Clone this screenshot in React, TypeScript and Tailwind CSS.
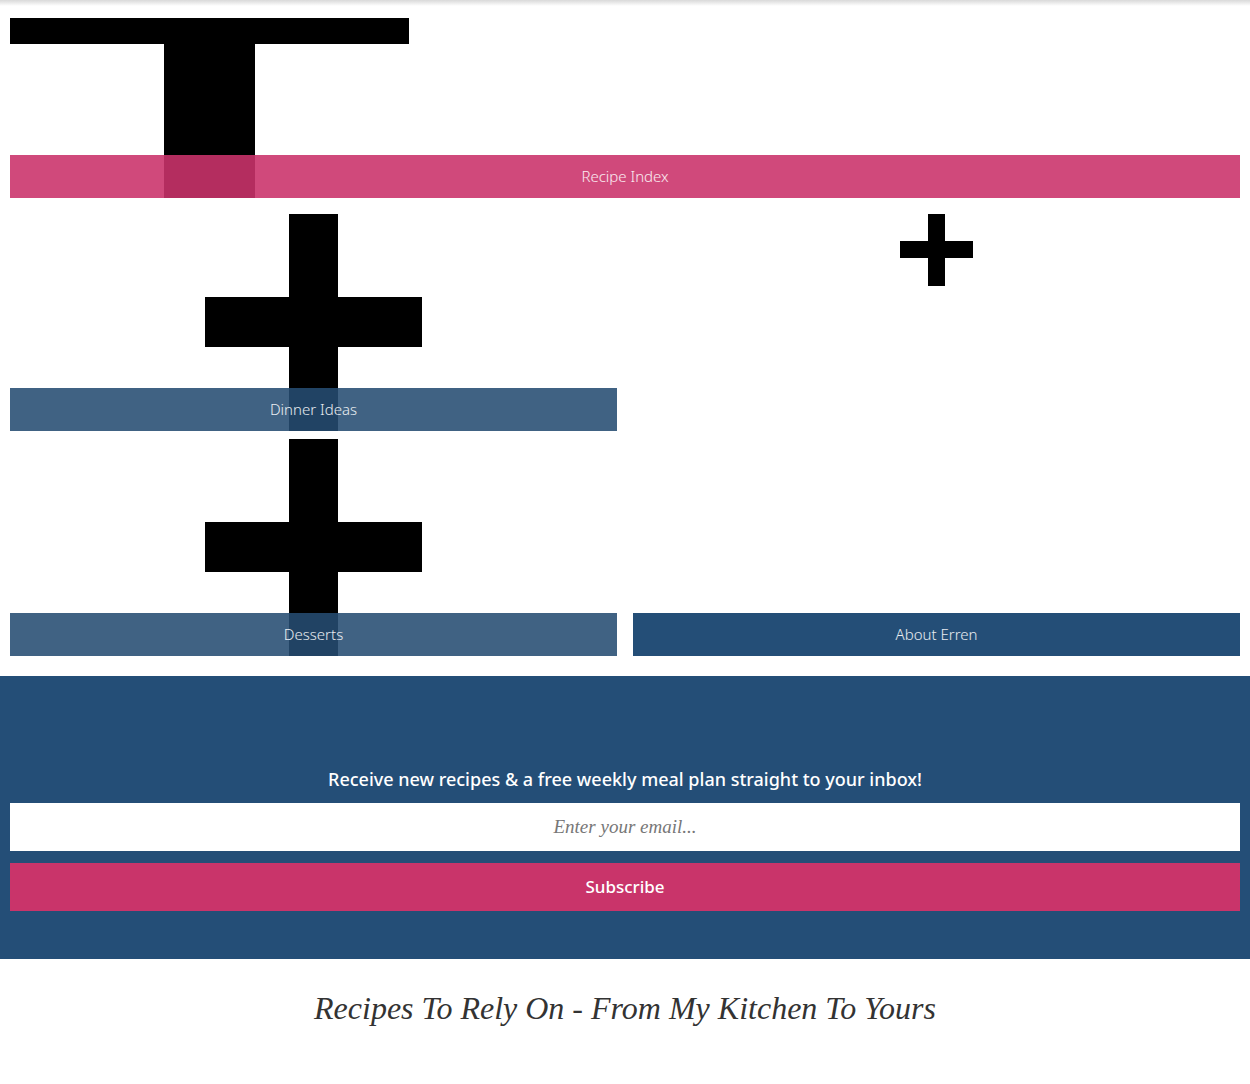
import React from "react";

const sans = { fontFamily: "'Noto Sans', Lato, sans-serif" };
const serif = { fontFamily: "'Liberation Serif', 'DejaVu Serif', serif" };

function Caption({ label, tone }: { label: string; tone: "pink" | "blue" | "solid" }) {
  const bg =
    tone === "pink"
      ? "bg-[rgba(202,51,107,0.89)]"
      : tone === "blue"
      ? "bg-[rgba(38,76,114,0.88)]"
      : "bg-[#244e77]";
  return (
    <div
      className={`absolute bottom-0 left-0 right-0 h-[43px] flex items-center justify-center text-[15px] font-light text-white/90 ${bg}`}
      style={sans}
    >
      {label}
    </div>
  );
}

function BigPlus() {
  return (
    <svg width="217" height="217" viewBox="0 0 217 217" className="block mx-auto">
      <rect x="84" y="0" width="49" height="217" fill="#000" />
      <rect x="0" y="83" width="217" height="50" fill="#000" />
    </svg>
  );
}

export default function App() {
  return (
    <div className="bg-white min-h-[1084px] w-full">
      <div className="h-[6px] bg-gradient-to-b from-[#d9d9d9] to-white" />
      <div className="px-[10px] pt-[12px]">
        <div className="relative h-[180px]">
          <svg width="399" height="180" viewBox="0 0 399 180" className="block">
            <rect x="0" y="0" width="399" height="26" fill="#000" />
            <rect x="154" y="26" width="91" height="154" fill="#000" />
          </svg>
          <Caption label="Recipe Index" tone="pink" />
        </div>
        <div className="mt-[16px] grid grid-cols-2 gap-x-[16px]">
          <div className="flex flex-col gap-[8px]">
            <div className="relative h-[217px]">
              <BigPlus />
              <Caption label="Dinner Ideas" tone="blue" />
            </div>
            <div className="relative h-[217px]">
              <BigPlus />
              <Caption label="Desserts" tone="blue" />
            </div>
          </div>
          <div className="relative h-[442px]">
            <svg width="73" height="72" viewBox="0 0 73 72" className="block mx-auto">
              <rect x="28" y="0" width="17" height="72" fill="#000" />
              <rect x="0" y="27" width="73" height="17" fill="#000" />
            </svg>
            <Caption label="About Erren" tone="solid" />
          </div>
        </div>
      </div>
      <div className="mt-[20px] bg-[#244e77] px-[10px] pt-[91px] pb-[48px]">
        <p className="text-center text-[18px] leading-[24px] font-medium text-white" style={sans}>
          Receive new recipes &amp; a free weekly meal plan straight to your inbox!
        </p>
        <div className="mt-[12px] h-[48px] bg-white flex items-center justify-center">
          <span className="italic text-[19px] text-[#777]" style={serif}>
            Enter your email...
          </span>
        </div>
        <div
          className="mt-[12px] h-[48px] bg-[#c9346a] flex items-center justify-center text-white text-[17px] font-medium"
          style={sans}
        >
          Subscribe
        </div>
      </div>
      <h2 className="mt-[28px] text-center italic text-[32px] leading-[42px] text-[#333]" style={serif}>
        Recipes To Rely On - From My Kitchen To Yours
      </h2>
    </div>
  );
}
